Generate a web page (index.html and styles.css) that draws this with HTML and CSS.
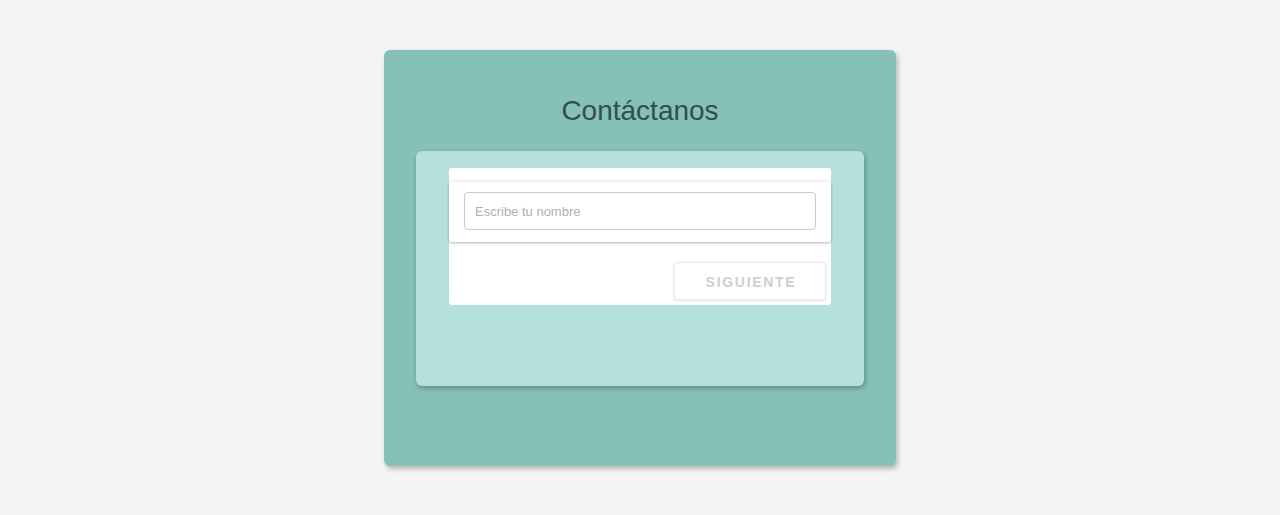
FILE: index.html
```html
<!DOCTYPE html>
<html lang="es">
<head>
<meta charset="utf-8">
<title>Contáctanos</title>
<link rel="stylesheet" href="styles.css">
</head>
<body>
<main class="card">
  <h1 class="title">Contáctanos</h1>
  <section class="panel">
    <form class="form">
      <div class="step">
        <input class="field" type="text" placeholder="Escribe tu nombre">
      </div>
      <div class="actions">
        <button class="next" type="button">SIGUIENTE</button>
      </div>
    </form>
  </section>
</main>
</body>
</html>
```

FILE: styles.css
```css
* { box-sizing: border-box; }
html, body { margin: 0; padding: 0; }
body {
  background: #f4f4f4;
  font-family: "Liberation Sans", Arial, sans-serif;
  display: flex;
  justify-content: center;
  min-height: 515px;
}
.card {
  margin-top: 50px;
  width: 512px;
  height: 416px;
  background: #86c1b9;
  border-radius: 6px;
  box-shadow: 2px 3px 5px rgba(0,0,0,0.25);
  padding: 45px 32px 0;
}
.title {
  margin: 0 0 24px;
  font-size: 28px;
  line-height: 32px;
  font-weight: normal;
  color: #30504b;
  text-align: center;
}
.panel {
  height: 235px;
  background: #b5e0dc;
  border-radius: 6px;
  box-shadow: 1px 2px 5px rgba(0,0,0,0.3);
  padding: 17px 33px;
}
.form {
  margin: 0;
  height: 137px;
  background: #fff;
  border-radius: 3px;
  padding-top: 13px;
}
.step {
  background: #fff;
  border-top: 1px solid #eee;
  border-radius: 3px;
  box-shadow: 0 1px 3px rgba(0,0,0,0.3);
  padding: 10px 15px 12px;
}
.field {
  display: block;
  width: 100%;
  height: 38px;
  border: 1px solid #c9c9c9;
  border-radius: 4px;
  padding: 0 10px;
  font-family: "Liberation Sans", Arial, sans-serif;
  font-size: 13px;
  color: #333;
  background: #fff;
  outline: none;
}
.field::placeholder { color: #b0b0b0; }
.actions {
  display: flex;
  justify-content: flex-end;
  padding: 20px 5px 0;
}
.next {
  width: 152px;
  height: 38px;
  background: #fff;
  border: 1px solid #eaeaea;
  border-radius: 3px;
  box-shadow: 0 1px 3px rgba(0,0,0,0.12);
  font-family: "Liberation Sans", Arial, sans-serif;
  font-weight: bold;
  font-size: 14px;
  letter-spacing: 1.7px;
  color: #cfcfcf;
  padding: 2px 0 0 2px;
  cursor: pointer;
}
```
